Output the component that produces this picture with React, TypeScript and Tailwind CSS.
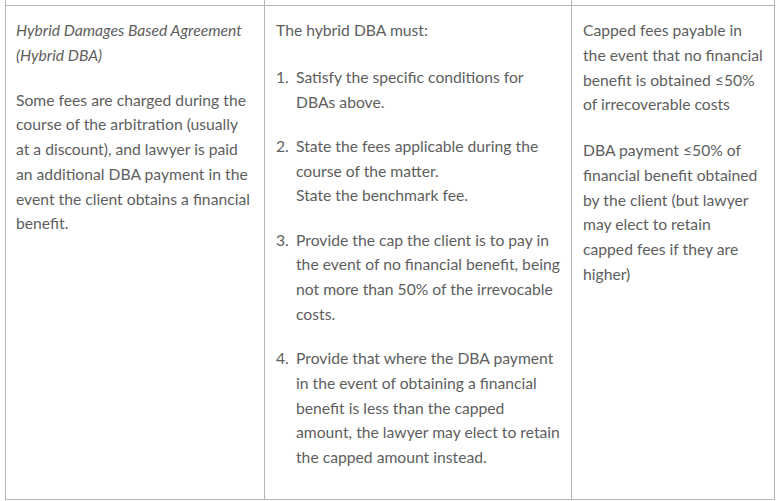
const Lines = ({ lines }: { lines: string[] }) => (
  <>
    {lines.map((l, i) => (
      <span key={i} className="block whitespace-nowrap">
        {l}
      </span>
    ))}
  </>
);

export default function App() {
  const cell = "border-l border-[#b5b5b5] pt-3 pb-[29px] pl-[10px]";
  const items = [
    [["Satisfy the specific conditions for", "DBAs above."]],
    [["State the fees applicable during the", "course of the matter."], ["State the benchmark fee."]],
    [["Provide the cap the client is to pay in", "the event of no financial benefit, being", "not more than 50% of the irrevocable", "costs."]],
    [
      [
        "Provide that where the DBA payment",
        "in the event of obtaining a financial",
        "benefit is less than the capped",
        "amount, the lawyer may elect to retain",
        "the capped amount instead.",
      ],
    ],
  ];

  return (
    <div className="min-h-screen w-[778px] bg-white pl-[5px] font-['Lato','Open_Sans',sans-serif] text-[15.7px] leading-[24.75px] text-[#5e5e5e]">
      {/* tail of the row above */}
      <div className="grid h-[5px] w-[770px] grid-cols-[259px_307px_204px]">
        <div className="border-l border-[#b5b5b5]" />
        <div className="border-l border-[#b5b5b5]" />
        <div className="border-x border-[#b5b5b5]" />
      </div>

      <div className="grid w-[770px] grid-cols-[259px_307px_204px] border-y border-[#b5b5b5]">
        <div className={cell}>
          <p className="mb-5 italic">
            <Lines lines={["Hybrid Damages Based Agreement", "(Hybrid DBA)"]} />
          </p>
          <p>
            <Lines
              lines={[
                "Some fees are charged during the",
                "course of the arbitration (usually",
                "at a discount), and lawyer is paid",
                "an additional DBA payment in the",
                "event the client obtains a financial",
                "benefit.",
              ]}
            />
          </p>
        </div>

        <div className={cell + " pl-[11px]"}>
          <p className="mb-[22px]">The hybrid DBA must:</p>
          <ol className="flex flex-col gap-[19.5px]">
            {items.map((paras, i) => (
              <li key={i} className="flex">
                <span className="w-[20px] shrink-0">{i + 1}.</span>
                <div>
                  {paras.map((p, j) => (
                    <p key={j}>
                      <Lines lines={p} />
                    </p>
                  ))}
                </div>
              </li>
            ))}
          </ol>
        </div>

        <div className={cell + " border-r pl-[11px]"}>
          <p className="mb-[21px]">
            <Lines
              lines={["Capped fees payable in", "the event that no financial", "benefit is obtained ≤50%", "of irrecoverable costs"]}
            />
          </p>
          <p>
            <Lines
              lines={[
                "DBA payment ≤50% of",
                "financial benefit obtained",
                "by the client (but lawyer",
                "may elect to retain",
                "capped fees if they are",
                "higher)",
              ]}
            />
          </p>
        </div>
      </div>
    </div>
  );
}
